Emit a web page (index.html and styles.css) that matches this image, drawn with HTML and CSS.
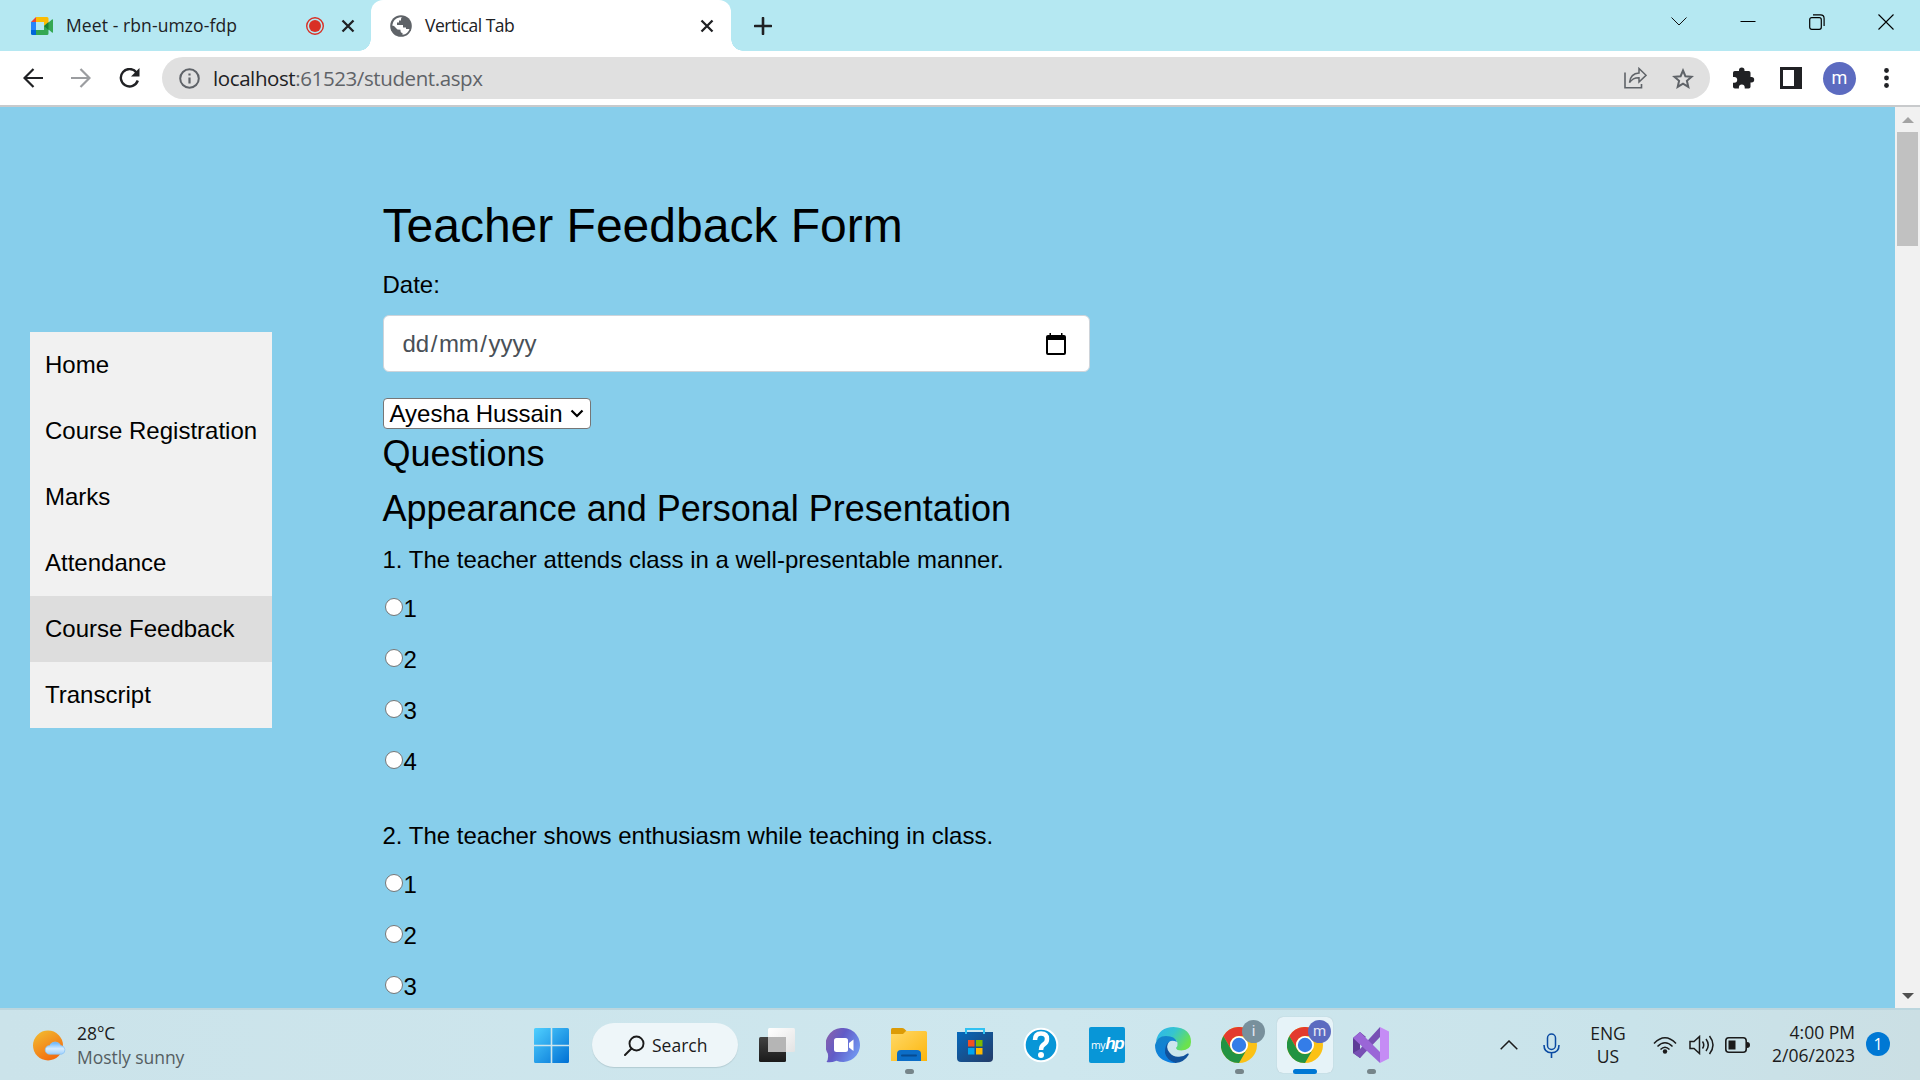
FILE: index.html
```html
<!DOCTYPE html>
<html lang="en">
<head>
<meta charset="utf-8">
<title>Vertical Tab</title>
<link rel="stylesheet" href="styles.css">
</head>
<body>
<header class="browser">
  <div class="tabstrip">
    <div class="tab tab-idle">
      <svg class="fav-meet" width="22" height="18" viewBox="0 0 22 18"><path fill="#fbbc04" d="M5 0h11q1.500 0 1.500 1.500V6L13 9V5H5z"/><path fill="#ea4335" d="M5 0v5H0z"/><path fill="#2684fc" d="M0 5h5v8H0z"/><path fill="#0066da" d="M0 13h5v5H1.500Q0 18 0 16.500z"/><path fill="#34a853" d="M5 13h8V9l4.500-3.500L21 2.500q1-.7 1 .5v12q0 1.200-1 .5l-3.500-3v4q0 1.500-1.500 1.500H5z"/><path fill="#188038" d="M13 9l4.500-4v8z"/></svg>
      <span class="tab-title title-meet">Meet - rbn-umzo-fdp</span>
      <svg class="rec" width="18" height="18" viewBox="0 0 18 18"><circle cx="9" cy="9" r="8.300" fill="none" stroke="#d93025" stroke-width="1.400"/><circle cx="9" cy="9" r="6" fill="#d93025"/></svg>
      <svg class="tab-x" width="14" height="14" viewBox="0 0 14 14"><path d="M1.500 1.500l11 11M12.500 1.500l-11 11" stroke="#202124" stroke-width="2.300"/></svg>
    </div>
    <div class="tab tab-active">
      <svg class="fav-globe" width="22" height="22" viewBox="0 0 22 22"><circle cx="11" cy="11" r="10.800" fill="#5f6368"/><path fill="#fff" d="M12.500 2.300q-1.500.2-1.500 1.700v1.500H9v2H7v2.500h6v2.500h3v1.500h3.500Q18 19 12.500 19.800V18q-2 0-2-2v-1.200l-3-.3-3.500-3.500-1.800-.5Q3 3.500 10 2.200z"/><path fill="#5f6368" d="M12 3q2 0 1 2l3 1v3l3 1.500 1-4L15 2z"/></svg>
      <span class="tab-title title-active">Vertical Tab</span>
      <svg class="tab-x" width="14" height="14" viewBox="0 0 14 14"><path d="M1.500 1.500l11 11M12.500 1.500l-11 11" stroke="#202124" stroke-width="2.300"/></svg>
    </div>
    <svg class="new-tab" width="18" height="18" viewBox="0 0 18 18"><path d="M9 1v16M1 9h16" stroke="#202124" stroke-width="2.600" stroke-linecap="round"/></svg>
    <div class="win-controls">
      <svg width="16" height="16" viewBox="0 0 16 16"><path d="M.5 3.500L8 11l7.500-7.500" fill="none" stroke="#111"/></svg>
      <svg width="16" height="16" viewBox="0 0 16 16"><path d="M.5 7.500h15" stroke="#000"/></svg>
      <svg width="16" height="16" viewBox="0 0 16 16"><rect x=".7" y="3.700" width="11.600" height="11.600" rx="2" fill="none" stroke="#000" stroke-width="1.200"/><path d="M4 .9h7.500q3.600 0 3.600 3.600V12" fill="none" stroke="#000" stroke-width="1.200"/></svg>
      <svg width="16" height="16" viewBox="0 0 16 16"><path d="M.5 .5l15 15M15.500 .5l-15 15" stroke="#000" stroke-width="1.100"/></svg>
    </div>
  </div>
  <div class="toolbar">
    <svg class="nav-i" width="20" height="20" viewBox="0 0 20 20"><path d="M20 10H2M10.500 1L1.500 10l9 9" fill="none" stroke="#202124" stroke-width="2.200"/></svg>
    <svg class="nav-i" width="20" height="20" viewBox="0 0 20 20"><path d="M0 10h18M9.500 1l9 9-9 9" fill="none" stroke="#9b9da0" stroke-width="2.200"/></svg>
    <svg class="nav-i" width="22" height="20" viewBox="0 0 22 20"><path d="M17.500 4.500A8.700 8.700 0 1 0 18.800 12.500" fill="none" stroke="#202124" stroke-width="2.400"/><path d="M20.500 0v8.500H12z" fill="#202124"/></svg>
    <div class="omnibox">
      <svg width="21" height="21" viewBox="0 0 21 21"><circle cx="10.500" cy="10.500" r="9.300" fill="none" stroke="#5f6368" stroke-width="2"/><path d="M10.500 9.500v6M10.500 5.500v2" stroke="#5f6368" stroke-width="2.200"/></svg>
      <span class="url"><b>localhost</b>:61523/student.aspx</span>
      <svg class="share" width="23" height="22" viewBox="0 0 23 22"><path d="M1 5.500V20.700h16.500V17" fill="none" stroke="#5f6368" stroke-width="1.600"/><path d="M5.500 15.500Q6.500 6.500 15 6V1.500L22 8.300 15 15v-4.300Q9 10.500 5.500 15.500z" fill="none" stroke="#5f6368" stroke-width="1.500"/></svg>
      <svg class="star" width="22" height="21" viewBox="0 0 22 21"><path d="M11 2.500l2.400 5.700 6.200.5-4.700 4.100 1.400 6.100L11 15.700l-5.300 3.200 1.400-6.100-4.700-4.100 6.200-.5z" fill="none" stroke="#5f6368" stroke-width="2"/></svg>
    </div>
    <svg class="ext" width="22" height="22" viewBox="0 0 22 22"><path fill="#202124" d="M1.800 4H6V3.200a2.700 2.700 0 0 1 5.500 0V4h4.200q1.800 0 1.800 1.800V10h1a2.700 2.700 0 0 1 0 5.400h-1v4.300q0 1.800-1.800 1.800h-4v-1.200a2.900 2.900 0 0 0-5.800 0v1.200h-4Q0 21.500 0 19.700v-4h1.300a2.900 2.900 0 0 0 0-5.800H0V5.800Q0 4 1.800 4z"/></svg>
    <svg class="panel" width="22" height="22" viewBox="0 0 22 22"><path fill="#202124" fill-rule="evenodd" d="M0 0h22v22H0zM3 3v16h11V3z"/></svg>
    <span class="avatar">m</span>
    <svg class="dots" width="5" height="20" viewBox="0 0 5 20"><g fill="#202124"><circle cx="2.500" cy="2.500" r="2.400"/><circle cx="2.500" cy="10" r="2.400"/><circle cx="2.500" cy="17.500" r="2.400"/></g></svg>
  </div>
</header>

<main class="viewport">
  <nav class="menu">
    <a>Home</a><a>Course Registration</a><a>Marks</a><a>Attendance</a><a class="current">Course Feedback</a><a>Transcript</a>
  </nav>
  <form class="form">
    <h1>Teacher Feedback Form</h1>
    <label class="date-label">Date:</label>
    <div class="date-field"><span>dd<i>/</i>mm<i>/</i>yyyy</span>
      <svg width="20" height="22" viewBox="0 0 20 22"><path fill="#000" fill-rule="evenodd" d="M3.500 0H5v2h10V0h1.500v2H18q2 0 2 2v16q0 2-2 2H2q-2 0-2-2V4q0-2 2-2h1.500zM2 7v13h16V7z"/></svg>
    </div>
    <div class="picker"><span>Ayesha Hussain</span><svg width="14" height="9" viewBox="0 0 14 9"><path d="M1.500 1.500L7 7l5.500-5.500" fill="none" stroke="#000" stroke-width="2.200"/></svg></div>
    <h3 class="h-questions">Questions</h3>
    <h3 class="h-section">Appearance and Personal Presentation</h3>
    <div class="question">
      <p>1. The teacher attends class in a well-presentable manner.</p>
      <label><input type="radio" name="q1">1</label>
      <label><input type="radio" name="q1">2</label>
      <label><input type="radio" name="q1">3</label>
      <label><input type="radio" name="q1">4</label>
    </div>
    <div class="question">
      <p>2. The teacher shows enthusiasm while teaching in class.</p>
      <label><input type="radio" name="q2">1</label>
      <label><input type="radio" name="q2">2</label>
      <label><input type="radio" name="q2">3</label>
    </div>
  </form>
  <div class="scrollbar">
    <svg width="12" height="6" viewBox="0 0 12 6"><path d="M0 6L6 0l6 6z" fill="#a3a3a3"/></svg>
    <div class="thumb"></div>
    <svg class="down" width="12" height="6" viewBox="0 0 12 6"><path d="M0 0h12L6 6z" fill="#505050"/></svg>
  </div>
</main>

<footer class="taskbar">
  <div class="weather">
    <svg width="34" height="32" viewBox="0 0 34 32"><defs><linearGradient id="sun" x1="0" y1="0" x2=".6" y2="1"><stop offset="0" stop-color="#f2c032"/><stop offset="1" stop-color="#f36c10"/></linearGradient><linearGradient id="cloud" x1="0" y1="0" x2="0" y2="1"><stop offset="0" stop-color="#5fb2fb"/><stop offset=".55" stop-color="#d6ecff"/><stop offset="1" stop-color="#9fd0fb"/></linearGradient></defs><circle cx="15" cy="15.500" r="15" fill="url(#sun)"/><path d="M16.500 24.200a4.300 4.300 0 0 1 0-8.600 6.200 6.200 0 0 1 11.300 0 4.400 4.400 0 0 1 1 8.600z" fill="url(#cloud)" stroke="#86c3f7" stroke-width=".7"/></svg>
    <div><div class="temp">28°C</div><div class="cond">Mostly sunny</div></div>
  </div>
  <div class="apps">
    <div class="app"><svg width="35" height="35" viewBox="0 0 35 35"><defs><linearGradient id="win" gradientUnits="userSpaceOnUse" x1="0" y1="0" x2="35" y2="35"><stop offset="0" stop-color="#50d0ff"/><stop offset="1" stop-color="#0070d4"/></linearGradient></defs><path fill="url(#win)" d="M1.500 0H16.700V16.700H0V1.500Q0 0 1.500 0zM18.300 0H33.500Q35 0 35 1.500V16.700H18.300zM0 18.300h16.700V35H1.500Q0 35 0 33.500zM18.300 18.300H35V33.500Q35 35 33.500 35H18.300z"/></svg></div>
    <div class="search"><svg width="21" height="21" viewBox="0 0 21 21"><circle cx="12.500" cy="8.500" r="7" fill="none" stroke="#1b1b1b" stroke-width="1.900"/><path d="M7.500 13.500L1 20" stroke="#1b1b1b" stroke-width="2" stroke-linecap="round"/></svg><span>Search</span></div>
    <div class="app"><svg width="36" height="34" viewBox="0 0 36 34"><defs><linearGradient id="tv" x1="0" y1="0" x2="0" y2="1"><stop offset="0" stop-color="#424242"/><stop offset="1" stop-color="#1a1a1a"/></linearGradient><linearGradient id="tw" x1="0" y1="0" x2="1" y2="1"><stop offset="0" stop-color="#fff"/><stop offset="1" stop-color="#e3e3e3"/></linearGradient></defs><rect y="9" width="27" height="25" rx="1.500" fill="url(#tv)"/><rect x="9" width="27" height="24" rx="1.500" fill="url(#tw)"/><path d="M9 9h18v15H9z" fill="#b5b5b5"/></svg></div>
    <div class="app"><svg width="35" height="35" viewBox="0 0 35 35"><defs><linearGradient id="chat" x1="0" y1="0" x2="1" y2=".5"><stop offset="0" stop-color="#8f62a8"/><stop offset=".5" stop-color="#615bc7"/><stop offset="1" stop-color="#6f91ed"/></linearGradient></defs><path d="M17.500 0a17 17 0 1 1-7 32.700Q5 35 .5 34q2.300-3 1.300-8.500A17 17 0 0 1 17.500 0z" fill="url(#chat)"/><rect x="8" y="10" width="14" height="14" rx="2.500" fill="#fff"/><path d="M23 15l4.500-3.500v11.500L23 19.500z" fill="#fff"/></svg></div>
    <div class="app running"><svg width="36" height="34" viewBox="0 0 36 34"><defs><linearGradient id="fold" x1="0" y1="0" x2="1" y2="1"><stop offset="0" stop-color="#ffd968"/><stop offset="1" stop-color="#fcb50c"/></linearGradient></defs><path d="M0 8V1.500Q0 0 1.500 0H11q1.500 0 2.500 1L16 3.500V8z" fill="#dc9b06"/><path d="M0 6h12l3-3h19.500Q36 3 36 4.500V33H0z" fill="url(#fold)"/><path d="M6 33v-7q0-4 4-4h16q4 0 4 4v7z" fill="#0b6dc7"/><path d="M11 27.500h14" stroke="#064b91" stroke-width="2" stroke-linecap="round"/></svg></div>
    <div class="app"><svg width="36" height="36" viewBox="0 0 36 36"><defs><linearGradient id="store" x1="0" y1="0" x2="1" y2="1"><stop offset="0" stop-color="#0669bc"/><stop offset="1" stop-color="#243b67"/></linearGradient></defs><path d="M0 5h36v26q0 4-4 4H4q-4 0-4-4z" fill="url(#store)"/><path d="M9 7V2h18v5" fill="none" stroke="#30c1f2" stroke-width="2"/><path d="M11 13h6.500v6.500H11z" fill="#f25022"/><path d="M19 13h6.500v6.500H19z" fill="#7fba00"/><path d="M11 21h6.500v6.500H11z" fill="#00a4ef"/><path d="M19 21h6.500v6.500H19z" fill="#ffb900"/></svg></div>
    <div class="app"><svg width="36" height="36" viewBox="0 0 36 36"><circle cx="18" cy="18" r="16.300" fill="#0896d7" stroke="#fff" stroke-width="2"/><path d="M12 13Q12 6.500 18 6.500t6 5.500q0 3.500-3 5.300T18 23" fill="none" stroke="#fff" stroke-width="4.500"/><circle cx="18" cy="28" r="3" fill="#fff"/></svg></div>
    <div class="app"><div class="myhp"><span>my</span><b>hp</b></div></div>
    <div class="app"><svg width="36" height="36" viewBox="0 0 36 36"><defs><linearGradient id="e1" x1="0" y1="0" x2="1" y2=".5"><stop offset="0" stop-color="#2cb4f0"/><stop offset=".5" stop-color="#36c5cf"/><stop offset="1" stop-color="#6be24d"/></linearGradient><linearGradient id="e2" x1="0" y1="0" x2=".3" y2="1"><stop offset="0" stop-color="#1585c8"/><stop offset="1" stop-color="#0c7fe0"/></linearGradient></defs><path d="M1 14Q4 0 18.500 0 36 1 36 15q0 8-9.500 8.500-5 0-5.500-2.500 2-2 1.500-5-1-4-5-4Q9 8 1 14z" fill="url(#e1)"/><path d="M0 18Q2 9 11 9q9 0 11 6-5-2.500-8 0-4 4-1.500 11 3 7 9.500 9.500-4 1-9-.5Q0 31 0 18z" fill="url(#e2)"/><path d="M14 14.500q-4 5.500.5 11t11 4q4-.5 7-3 2-.5 1 1.500-4 7-13 8-9-3-10.500-10-.5-7.500 4-11.500z" fill="#11529c"/></svg></div>
    <div class="app running chrome"><svg width="36" height="36" viewBox="0 0 36 36"><use href="#chrome-logo"/></svg><span class="badge grey">i</span></div>
    <div class="app focused chrome"><svg width="36" height="36" viewBox="0 0 36 36"><g id="chrome-logo"><circle cx="18" cy="18" r="18" fill="#fbc116"/><path d="M2.400 9A18 18 0 0 1 33.600 9H18a9 9 0 0 0-7.800 13.500z" fill="#e33b2e"/><path d="M2.400 9A18 18 0 0 0 18 36l7.800-13.500A9 9 0 0 1 10.200 22.500z" fill="#229342"/><circle cx="18" cy="18" r="9" fill="#fff"/><circle cx="18" cy="18" r="7.200" fill="#347de8"/></g></svg><span class="badge violet">m</span></div>
    <div class="app running"><svg width="36" height="36" viewBox="0 0 36 36"><path d="M0 11l7-6 6 5-6 4v8l4 4-4 5-7-5z" fill="#5d3c96"/><path d="M7 22L27 0v10L7 31l-7-5z" fill="#7750b4"/><path d="M7 5l20 20v11L0 11z" fill="#9a66d7"/><path d="M27 0l9 4.500v27L27 36z" fill="#c58cf5"/></svg></div>
  </div>
  <div class="tray">
    <svg class="t-up" width="18" height="10" viewBox="0 0 18 10"><path d="M.7 9.300L9 1l8.300 8.300" fill="none" stroke="#1b1b1b" stroke-width="1.500"/></svg>
    <svg class="t-mic" width="17" height="25" viewBox="0 0 17 25"><rect x="4.500" y="1" width="8" height="15.500" rx="4" fill="none" stroke="#0a4aa2" stroke-width="1.500"/><path d="M1 12q0 7.700 7.500 7.700T16 12M8.500 20v5" fill="none" stroke="#0a4aa2" stroke-width="1.600"/></svg>
    <div class="lang">ENG<br>US</div>
    <svg class="t-wifi" width="24" height="18" viewBox="0 0 24 18"><path d="M1 7.500Q12-4 23 7.500M4.500 10.500q7.500-7.500 15 0M7.500 13.500q4.500-4.500 9 0" fill="none" stroke="#1b1b1b" stroke-width="1.500"/><circle cx="12" cy="15.500" r="2.200" fill="#1b1b1b"/></svg>
    <svg class="t-vol" width="25" height="20" viewBox="0 0 25 20"><path d="M1 6.500h4L10.500 1.500v17L5 13.500H1zM13.500 6.500q2.500 3.500 0 7M17 4q4.500 6 0 12M20.500 1q7 9 0 18" fill="none" stroke="#1b1b1b" stroke-width="1.500"/></svg>
    <svg class="t-bat" width="25" height="16" viewBox="0 0 25 16"><rect x=".8" y=".8" width="20.400" height="14.400" rx="3" fill="none" stroke="#1b1b1b" stroke-width="1.600"/><path d="M3.500 3.500H10.500v9H3.500zM22 5q3 0 3 3t-3 3z" fill="#1b1b1b"/></svg>
    <div class="clock"><div class="time">4:00 PM</div><div class="date">2/06/2023</div></div>
    <span class="count">1</span>
  </div>
</footer>
</body>
</html>
```
FILE: styles.css
```css
* { box-sizing: border-box; }
body { margin: 0; width: 1920px; height: 1080px; overflow: hidden; display: flex; flex-direction: column; font-family: "Open Sans", "Noto Sans", sans-serif; }
svg { display: block; flex: none; }

.browser { height: 107px; flex: none; background: #fff; border-bottom: 2px solid #c8cacc; }
.tabstrip { height: 51px; display: flex; align-items: center; background: #b5e8f2; }
.tab { height: 51px; display: flex; align-items: center; }
.tab-idle { width: 371px; padding-left: 31px; background: #b5e8f2; }
.tab-title { font-size: 17.500px; color: #202124; white-space: nowrap; line-height: 24px; padding-bottom: 1px; }
.title-meet { margin-left: 13px; width: 240px; letter-spacing: .1px; }
.rec { margin-right: 17px; }
.tab-active { width: 360px; padding: 0 17px 0 19px; background: #fff; border-radius: 12px 12px 0 0; position: relative; }
.tab-active::before, .tab-active::after { content: ""; position: absolute; bottom: 0; width: 12px; height: 12px; }
.tab-active::before { left: -12px; background: radial-gradient(circle at 0 0, transparent 11.500px, #fff 12px); }
.tab-active::after { right: -12px; background: radial-gradient(circle at 100% 0, transparent 11.500px, #fff 12px); }
.title-active { margin-left: 13px; flex: 1; letter-spacing: -.5px; }
.new-tab { margin-left: 23px; }
.win-controls { margin-left: auto; padding: 0 26px 8px 0; display: flex; gap: 53px; }

.toolbar { height: 54px; display: flex; align-items: center; padding-left: 23px; }
.nav-i { margin-right: 28px; }
.omnibox { width: 1548px; height: 42px; margin-left: -7px; border-radius: 21px; background: #e0e0e0; display: flex; align-items: center; padding: 0 16px 0 17px; }
.url { margin-left: 13px; flex: 1; font-size: 20.500px; line-height: 28px; letter-spacing: -.4px; color: #5f6368; }
.url b { font-weight: 400; color: #202124; }
.star { margin-left: 25px; }
.ext { margin-left: 23px; }
.panel { margin-left: 25px; }
.avatar { width: 33px; height: 33px; margin-left: 21px; border-radius: 50%; background: #5c6bc0; color: #fff; font: 18px/31px Roboto, sans-serif; text-align: center; }
.dots { margin-left: 28px; }

.viewport { height: 901px; flex: none; display: flex; align-items: flex-start; background: #87ceeb; overflow: hidden; font-family: "Liberation Sans", Arial, sans-serif; font-size: 24px; color: #000; }
.menu { width: 242px; margin: 225px 0 0 30px; background: #f1f1f1; }
.menu a { display: block; height: 66px; padding-left: 15px; line-height: 65px; white-space: nowrap; }
.menu .current { background: #ddd; }
.form { margin-left: 110.500px; padding-top: 90px; flex: 1; }
h1, h3 { margin: 0; font-weight: 400; }
h1 { font-size: 48px; line-height: 58px; }
.date-label { display: block; margin-top: 12px; line-height: 36px; }
.date-field { width: 707px; height: 57px; margin-top: 12px; padding: 0 23px 0 19px; display: flex; align-items: center; justify-content: space-between; background: #fff; border: 1px solid #ced4da; border-radius: 6px; color: #495057; }
.date-field i { font-style: normal; margin: 0 1.500px; }
.picker { width: 208px; height: 31px; margin-top: 26px; padding: 0 6px; display: flex; align-items: center; justify-content: space-between; background: #fff; border: 1px solid #767676; border-radius: 4px; white-space: nowrap; line-height: 29px; }
h3 { font-size: 36px; line-height: 43px; }
.h-questions { margin-top: 3px; }
.h-section { margin-top: 12px; }
.question { height: 276px; }
.question p { margin: 0 0 13px; padding-top: 12px; line-height: 36px; }
.question label { display: flex; align-items: center; height: 36px; margin-bottom: 15px; }
.question input { appearance: none; width: 18px; height: 18px; margin: 0 1px 5px 2px; border: 1.500px solid #767676; border-radius: 50%; background: #fff; }
.scrollbar { width: 25px; height: 901px; background: #f1f1f1; display: flex; flex-direction: column; align-items: center; padding-top: 10px; }
.thumb { width: 21px; height: 114px; margin-top: 9px; background: #c1c1c1; }
.down { margin: auto 0 9px; }

.taskbar { height: 72px; flex: none; display: flex; background: linear-gradient(90deg, #cbe3ea, #cee7ee 55%, #c9e3ea 85%, #cbdfe4); border-top: 2px solid #bcd6de; color: #1b1b1b; }
.weather { width: 523px; height: 70px; display: flex; padding: 20px 0 0 33px; gap: 10px; font-size: 17.500px; line-height: 24px; letter-spacing: -.05px; }
.weather > div { margin-top: -9px; }
.cond { color: #555e62; }
.apps { display: flex; align-items: center; height: 70px; }
.app { width: 56px; height: 56px; margin-right: 10px; display: flex; align-items: center; justify-content: center; position: relative; }
.search { width: 146px; height: 44px; margin: 0 11px 0 3px; border-radius: 22px; background: #eef6f9; box-shadow: 0 1px 1px #b3cbd2; display: flex; align-items: center; padding-left: 32px; gap: 7px; font-size: 17.500px; }
.running::after, .focused::after { content: ""; position: absolute; bottom: -1px; left: 24px; width: 9px; height: 5px; border-radius: 3px; background: #76858a; }
.focused { background: #e6f3f8; border-radius: 6px; box-shadow: 0 0 1px #9eb5bc; }
.focused::after { left: 16px; width: 24px; background: #0078d4; }
.badge { position: absolute; left: 31px; top: 3px; width: 23px; height: 23px; border-radius: 50%; color: #e4e6f4; font: 15px/22px Roboto, sans-serif; text-align: center; }
.grey { background: #78909c; }
.violet { background: #5c6bc0; }
.myhp { width: 36px; height: 36px; border-radius: 2px; background: #0896d7; color: #fff; display: flex; align-items: baseline; justify-content: center; font-size: 10.500px; line-height: 34px; letter-spacing: -.3px; }
.myhp b { font: italic 700 17px/34px "Liberation Sans Narrow", "Liberation Sans", sans-serif; letter-spacing: -1.500px; }
.tray { margin-left: auto; height: 70px; display: flex; align-items: center; font-size: 17.500px; line-height: 23px; }
.t-mic { margin-left: 25px; }
.lang { width: 50px; margin-left: 23px; text-align: center; padding-bottom: 1px; }
.t-wifi { margin-left: 20px; }
.t-vol { margin-left: 12px; }
.t-bat { margin-left: 11px; }
.clock { width: 90px; margin-left: 15px; text-align: right; padding-bottom: 2px; }
.count { width: 24px; height: 24px; margin: 0 30px 2px 11px; border-radius: 50%; background: #0078d4; color: #fff; font-size: 16px; line-height: 24px; text-align: center; }
```
